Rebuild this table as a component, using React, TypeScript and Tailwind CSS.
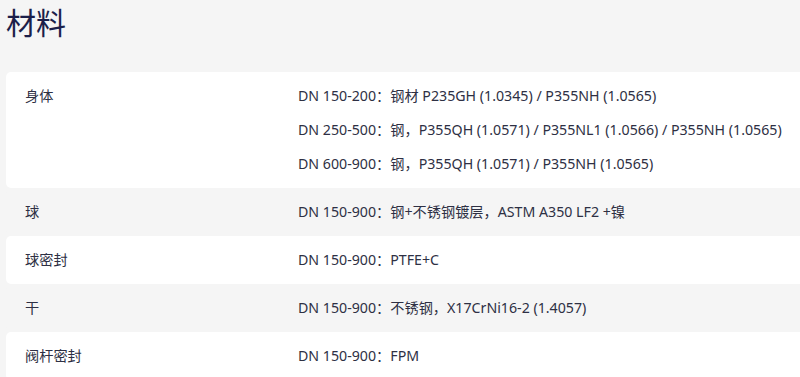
import React from "react";

const rows: { label: string; values: string[] }[] = [
  {
    label: "身体",
    values: [
      "DN 150-200：钢材 P235GH (1.0345) / P355NH (1.0565)",
      "DN 250-500：钢，P355QH (1.0571) / P355NL1 (1.0566) / P355NH (1.0565)",
      "DN 600-900：钢，P355QH (1.0571) / P355NH (1.0565)",
    ],
  },
  { label: "球", values: ["DN 150-900：钢+不锈钢镀层，ASTM A350 LF2 +镍"] },
  { label: "球密封", values: ["DN 150-900：PTFE+C"] },
  { label: "干", values: ["DN 150-900：不锈钢，X17CrNi16-2 (1.4057)"] },
  { label: "阀杆密封", values: ["DN 150-900：FPM"] },
];

export default function App() {
  return (
    <div
      className="w-[800px] h-[377px] overflow-hidden bg-[#f5f5f5] pl-[6px]"
      style={{ fontFamily: '"Noto Sans", "Noto Sans CJK SC", sans-serif' }}
    >
      <h2 className="text-[30px] leading-[44px] text-[#1c1f4a] pt-[1px] h-[72px]">材料</h2>
      <div className="flex flex-col">
        {rows.map((r, i) => (
          <div
            key={r.label}
            className={`flex py-[12px] pl-[19px] rounded-l-[5px] text-[14.2px] leading-[24px] text-[#2e3044] ${
              i % 2 === 0 ? "bg-white" : "bg-[#f5f5f5]"
            }`}
          >
            <div className="w-[273px] shrink-0">{r.label}</div>
            <div className="flex flex-col gap-[10px]">
              {r.values.map((v) => (
                <p key={v}>{v}</p>
              ))}
            </div>
          </div>
        ))}
      </div>
    </div>
  );
}
